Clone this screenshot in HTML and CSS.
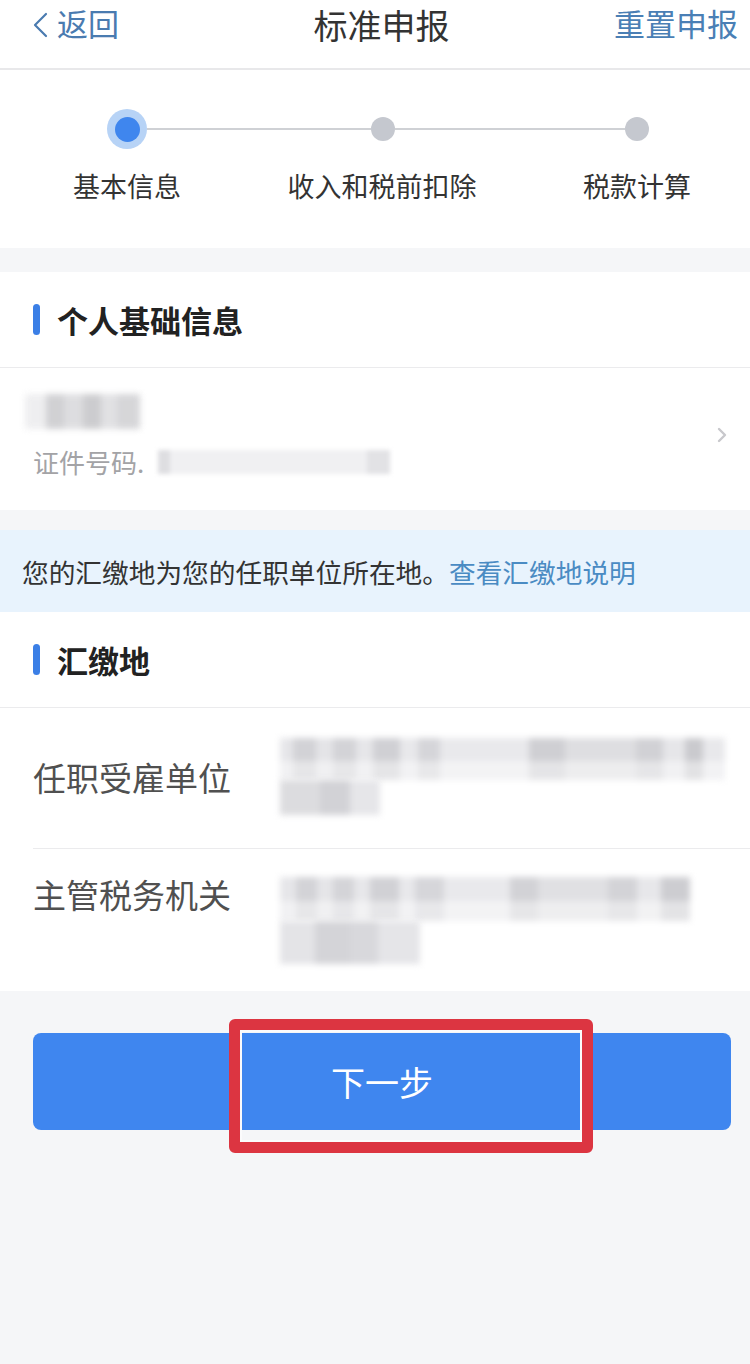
FILE: index.html
```html
<!DOCTYPE html>
<html lang="zh-CN">
<head>
<meta charset="utf-8">
<title>标准申报</title>
<link rel="stylesheet" href="styles.css">
</head>
<body>
<div class="page">
  <header class="topbar">
    <a class="back">
      <svg class="back-icon" viewBox="0 0 18 26" width="18" height="26"><path d="M15 2 L4 13 L15 24" fill="none" stroke="#4a7bb0" stroke-width="2.2" stroke-linecap="round" stroke-linejoin="round"/></svg>
      <span>返回</span>
    </a>
    <h1 class="title">标准申报</h1>
    <a class="reset">重置申报</a>
  </header>

  <section class="steps">
    <div class="track">
      <span class="dot-active"><span class="dot-core"></span></span>
      <span class="line line-a"></span>
      <span class="dot"></span>
      <span class="line line-b"></span>
      <span class="dot"></span>
    </div>
    <div class="labels">
      <span class="label">基本信息</span>
      <span class="label">收入和税前扣除</span>
      <span class="label">税款计算</span>
    </div>
  </section>

  <section class="card card-person">
    <div class="card-title"><span class="bar"></span><span>个人基础信息</span></div>
    <div class="person">
      <div class="person-info">
        <div class="blur-name"></div>
        <div class="id-line"><span>证件号码.</span><span class="blur-id"></span></div>
      </div>
      <svg class="chev" viewBox="0 0 10 16" width="10" height="16"><path d="M2 2 L8 8 L2 14" fill="none" stroke="#c8c8cc" stroke-width="2.4" stroke-linecap="round" stroke-linejoin="round"/></svg>
    </div>
  </section>

  <div class="notice">您的汇缴地为您的任职单位所在地。<a class="notice-link">查看汇缴地说明</a></div>

  <section class="card card-place">
    <div class="card-title"><span class="bar"></span><span>汇缴地</span></div>
    <div class="row row-center">
      <div class="row-label">任职受雇单位</div>
      <div class="row-value">
        <div class="mosaic mosaic-long"></div>
        <div class="mosaic mosaic-short"></div>
      </div>
    </div>
    <div class="row row-top last">
      <div class="row-label">主管税务机关</div>
      <div class="row-value">
        <div class="mosaic mosaic-long2"></div>
        <div class="mosaic mosaic-short2"></div>
      </div>
    </div>
  </section>

  <div class="actions">
    <button class="next">下一步</button>
    <span class="mark"></span>
  </div>
</div>
</body>
</html>
```
FILE: styles.css
```css
* { box-sizing: border-box; }
html, body { margin: 0; padding: 0; }
body {
  background: #f5f6f8;
  font-family: "Noto Sans CJK SC", "Noto Sans", sans-serif;
  color: #333;
}
.page { width: 750px; min-height: 1364px; background: #f5f6f8; overflow: hidden; }

/* header */
.topbar {
  height: 70px;
  background: #fff;
  border-bottom: 2px solid #e8e8ea;
  display: grid;
  grid-template-columns: 1fr auto 1fr;
  align-items: start;
  padding: 0 12px 0 25px;
}
.back {
  display: flex;
  align-items: center;
  margin-left: 6px;
  color: #4a7bb0;
  font-size: 31px;
  line-height: 46px;
  height: 46px;
}
.back-icon { margin-right: 8px; margin-top: 4px; }
.title {
  margin: 0;
  font-weight: normal;
  font-size: 34px;
  line-height: 50px;
  color: #333;
}
.reset {
  justify-self: end;
  color: #4a7fb5;
  font-size: 31px;
  line-height: 46px;
}

/* steps */
.steps {
  background: #fff;
  height: 178px;
  padding-top: 39px;
}
.track {
  display: flex;
  align-items: center;
  padding-left: 107px;
  height: 40px;
}
.dot-active {
  width: 40px; height: 40px;
  border-radius: 50%;
  background: #b7d3f6;
  display: flex; align-items: center; justify-content: center;
}
.dot-core { width: 25px; height: 25px; border-radius: 50%; background: #3f86ee; }
.line { height: 2px; background: #cfd1d5; }
.line-a { width: 224px; }
.line-b { width: 230px; }
.dot { width: 24px; height: 24px; border-radius: 50%; background: #c5c8cf; }
.labels {
  display: flex;
  gap: 55px;
  margin-left: 27px;
  margin-top: 17px;
}
.label {
  width: 200px;
  text-align: center;
  font-size: 27px;
  line-height: 40px;
  color: #333;
  white-space: nowrap;
}

/* cards */
.card { background: #fff; }
.card-person { margin-top: 24px; }
.card-title {
  height: 96px;
  display: flex;
  align-items: center;
  padding-left: 33px;
  border-bottom: 1px solid #ebebed;
  font-size: 31px;
  font-weight: bold;
  color: #222;
}
.bar {
  width: 7px; height: 31px;
  border-radius: 4px;
  background: #3b7fe6;
  margin-right: 17px;
}
.person {
  height: 142px;
  display: flex;
  align-items: center;
  justify-content: space-between;
}
.person-info { padding-left: 25px; align-self: flex-start; padding-top: 26px; }
.blur-name {
  width: 115px; height: 35px;
  background:
    linear-gradient(90deg, #ececee 0 18%, #c9c9cc 18% 34%, #d8d8db 34% 50%, #c4c4c7 50% 66%, #dcdcdf 66% 80%, #cfcfd2 80% 100%);
  filter: blur(3px);
  opacity: 0.85;
}
.id-line {
  display: flex;
  align-items: center;
  margin-top: 15px;
  padding-left: 8px;
  font-size: 26px;
  line-height: 36px;
  color: #a3a3a6;
}
.blur-id {
  width: 232px; height: 24px;
  margin-left: 14px;
  background: linear-gradient(90deg, #dedee1 0 5%, #f0f0f2 5% 90%, #e2e2e5 90% 100%);
  filter: blur(2px);
}
.chev { margin-right: 23px; margin-top: -8px; }

/* notice */
.notice {
  margin-top: 20px;
  height: 82px;
  background: #e8f3fd;
  padding-left: 22px;
  font-size: 26.7px;
  line-height: 84px;
  color: #333;
  white-space: nowrap;
}
.notice-link { color: #4a8bc3; }

/* place rows */
.card-place .card-title { height: 96px; }
.row {
  display: flex;
  margin-left: 33px;
  border-bottom: 1px solid #ebebed;
}
.row.last { border-bottom: none; }
.row-center { align-items: center; padding: 30px 0 33px; }
.row-top { align-items: flex-start; padding: 28px 0 27px; }
.row-label {
  width: 247px;
  flex: none;
  font-size: 33px;
  line-height: 42px;
  color: #505050;
}
.row-top .row-label { margin-top: -4px; }
.row-value { display: flex; flex-direction: column; }
.mosaic { filter: blur(3px); }
.mosaic-long {
  width: 445px; height: 42px;
  background:
    linear-gradient(180deg, rgba(255,255,255,0) 0 55%, rgba(255,255,255,0.45) 55% 100%),
    linear-gradient(90deg, #e6e6e9 0 3%, #d2d2d6 3% 8%, #e4e4e7 8% 12%, #d3d3d7 12% 17%, #e6e6e9 17% 21%, #d0d0d4 21% 27%, #e8e8eb 27% 31%, #d5d5d9 31% 36%, #e9e9ec 36% 56%, #cfcfd3 56% 64%, #dedee1 64% 80%, #d1d1d5 80% 86%, #e6e6e9 86% 91%, #cacace 91% 95%, #e8e8eb 95% 100%);
}
.mosaic-short {
  width: 100px; height: 35px;
  background: linear-gradient(90deg, #dcdcdf 0 40%, #d2d2d6 40% 70%, #e6e6e9 70% 100%);
}
.mosaic-long2 {
  width: 410px; height: 44px;
  background:
    linear-gradient(180deg, rgba(255,255,255,0) 0 55%, rgba(255,255,255,0.45) 55% 100%),
    linear-gradient(90deg, #e6e6e9 0 4%, #d3d3d7 4% 9%, #e5e5e8 9% 13%, #d4d4d8 13% 18%, #e7e7ea 18% 22%, #d1d1d5 22% 29%, #e8e8eb 29% 33%, #d6d6da 33% 40%, #e9e9ec 40% 56%, #d2d2d6 56% 63%, #e0e0e3 63% 80%, #d3d3d7 80% 87%, #e7e7ea 87% 93%, #cdcdd1 93% 100%);
}
.mosaic-short2 {
  width: 140px; height: 43px;
  background: linear-gradient(90deg, #e4e4e7 0 25%, #d4d4d8 25% 50%, #d8d8dc 50% 70%, #e5e5e8 70% 100%);
}

/* actions */
.actions {
  position: relative;
  margin: 42px 19px 0 33px;
}
.next {
  display: block;
  width: 100%;
  height: 97px;
  border: none;
  border-radius: 8px;
  background: #3f86ef;
  color: #fff;
  font-family: "Noto Sans CJK SC", "Noto Sans", sans-serif;
  font-size: 34px;
  line-height: 97px;
  padding: 0;
}
.mark {
  position: absolute;
  left: 196px;
  top: -14px;
  width: 364px;
  height: 134px;
  border: 11px solid #dc3541;
  border-radius: 6px;
  box-shadow: inset 0 0 0 2px #fbfbfc;
  pointer-events: none;
}
```
